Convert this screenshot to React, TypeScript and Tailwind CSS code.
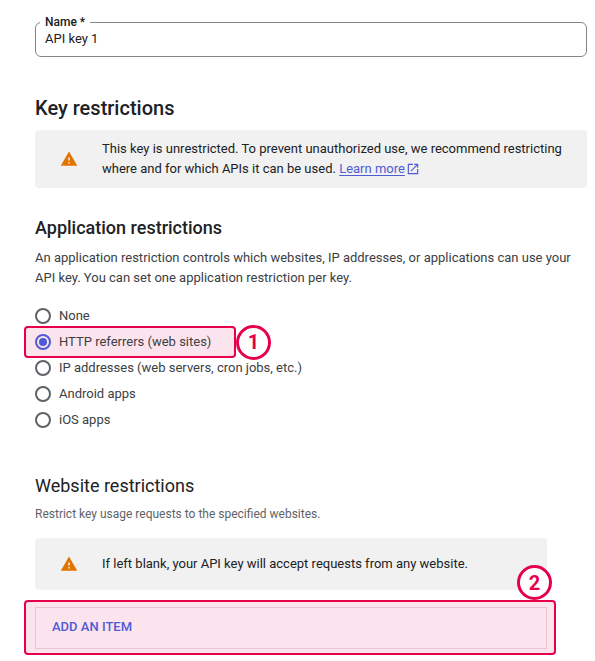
const options = [
  { label: 'None' },
  { label: 'HTTP referrers (web sites)', selected: true },
  { label: 'IP addresses (web servers, cron jobs, etc.)' },
  { label: 'Android apps' },
  { label: 'iOS apps' },
];

function Warning() {
  return (
    <svg viewBox="0 0 24 24" className="w-[18px] h-[18px] shrink-0 fill-[#e37400]">
      <path d="M1 21h22L12 2 1 21zm12-3h-2v-2h2v2zm0-4h-2v-4h2v4z" />
    </svg>
  );
}

function OpenInNew() {
  return (
    <svg viewBox="0 0 24 24" className="inline w-[14px] h-[14px] ml-[1px] mb-[2px] fill-[#4f5bd5]">
      <path d="M19 19H5V5h7V3H3v18h18v-9h-2v7zM14 3v2h3.59l-9.83 9.83 1.41 1.41L19 6.41V10h2V3h-7z" />
    </svg>
  );
}

function Radio({ selected }: { selected?: boolean }) {
  return (
    <span
      className={`w-4 h-4 rounded-full border-2 flex items-center justify-center shrink-0 ${
        selected ? 'border-[#4f5bd5]' : 'border-[#5f6368]'
      }`}
    >
      {selected && <span className="w-2 h-2 rounded-full bg-[#4f5bd5]" />}
    </span>
  );
}

function Badge({ n }: { n: number }) {
  return (
    <span className="w-[35px] h-[35px] rounded-full border-[3px] border-[#e6004c] bg-white flex items-center justify-center text-[#e6004c] text-xl font-bold">
      {n}
    </span>
  );
}

export default function App() {
  return (
    <div className="w-[595px] h-[661px] overflow-hidden bg-white pl-[35px] pr-2 pt-[22px] text-[#202124] font-['Roboto',sans-serif]">
      {/* Name field */}
      <div className="relative h-[35px] border border-[#80868b] rounded-md flex items-center px-[9px] pb-[2px] text-[13px]">
        <span className="absolute left-[4px] -top-[10px] bg-white px-[5px] text-xs font-medium leading-[18px]">Name *</span>
        API key 1
      </div>

      <h2 className="text-xl font-medium leading-6 mt-[39px]">Key restrictions</h2>
      <div className="mt-[10px] h-[58px] bg-[#f1f1f1] rounded flex items-center text-[13px] leading-5">
        <div className="w-[67px] flex justify-center">
          <Warning />
        </div>
        <p>
          This key is unrestricted. To prevent unauthorized use, we recommend restricting
          <br />
          where and for which APIs it can be used.{' '}
          <span className="text-[#4f5bd5] underline underline-offset-2">Learn more</span>
          <OpenInNew />
        </p>
      </div>

      <h2 className="text-lg font-medium leading-6 mt-[28px]">Application restrictions</h2>
      <p className="text-[13px] leading-5 mt-[8px] text-[#3c4043]">
        An application restriction controls which websites, IP addresses, or applications can use your
        <br />
        API key. You can set one application restriction per key.
      </p>

      {/* Radio list */}
      <div className="mt-[15px] flex flex-col text-[13px] text-[#3c4043]">
        {options.map((o) =>
          o.selected ? (
            <div key={o.label} className="relative -ml-[11px] h-[26px] flex items-center">
              <div className="h-[32px] w-[212px] shrink-0 pl-[9px] flex items-center gap-[8px] rounded border-2 border-[#e6004c] bg-[#fce4ef]">
                <Radio selected />
                <span>{o.label}</span>
              </div>
              <Badge n={1} />
            </div>
          ) : (
            <label key={o.label} className="h-[26px] flex items-center gap-[8px]">
              <Radio />
              <span>{o.label}</span>
            </label>
          ),
        )}
      </div>

      <h3 className="text-lg leading-6 mt-[41px]">Website restrictions</h3>
      <p className="text-xs leading-4 mt-[8px] text-[#5f6368]">Restrict key usage requests to the specified websites.</p>

      <div className="w-[512px] mt-[16px] h-[52px] bg-[#f1f1f1] rounded flex items-center text-[13px]">
        <div className="w-[67px] flex justify-center">
          <Warning />
        </div>
        <p>If left blank, your API key will accept requests from any website.</p>
      </div>

      {/* Add item */}
      <div className="relative w-[532px] -ml-[11px] mt-[10px] h-[55px] rounded border-2 border-[#e6004c] bg-[#fce4ef] flex items-center">
        <span className="absolute right-[2px] -top-[37px]">
          <Badge n={2} />
        </span>
        <div className="ml-[9px] w-[512px] h-[42px] border border-[#e8c4d4] flex items-center px-4 pb-[2px] text-[13px] font-medium text-[#4f5bd5]">
          ADD AN ITEM
        </div>
      </div>
    </div>
  );
}
